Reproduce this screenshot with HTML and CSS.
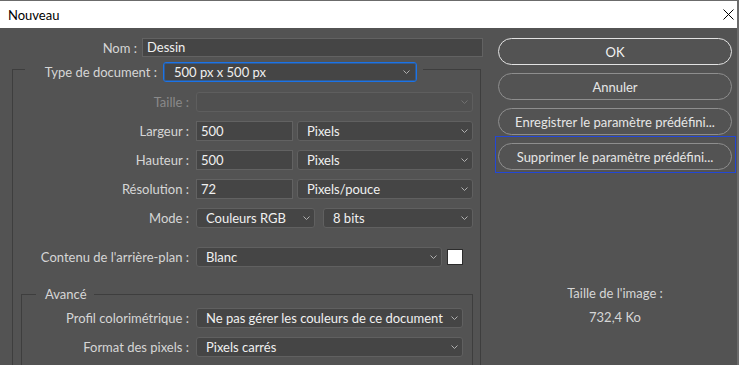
FILE: index.html
```html
<!DOCTYPE html>
<html lang="fr">
<head>
<meta charset="utf-8">
<title>Nouveau</title>
<link rel="stylesheet" href="styles.css">
</head>
<body>
<div class="window">
  <div class="titlebar">
    <span class="title">Nouveau</span>
    <svg class="close" width="11" height="11" viewBox="0 0 11 11"><path d="M0.5 0.5 L10.5 10.5 M10.5 0.5 L0.5 10.5" stroke="#000" stroke-width="1" fill="none"/></svg>
  </div>
  <div class="dialog-body">
    <div class="left">
      <div class="name-row">
        <span class="lbl">Nom :</span>
        <div class="input name-input">Dessin</div>
      </div>
      <fieldset class="doc">
        <legend class="doc-legend">
          <span class="lbl legend-lbl">Type de document :</span>
          <div class="select focus"><span>500 px x 500 px</span><svg class="chev" width="7" height="4" viewBox="0 0 7 4"><path d="M0.5 0.5 L3.5 3.5 L6.5 0.5"/></svg></div>
        </legend>
        <div class="form">
          <span class="lbl disabled">Taille :</span>
          <div class="select off"><span></span><svg class="chev" width="7" height="4" viewBox="0 0 7 4"><path d="M0.5 0.5 L3.5 3.5 L6.5 0.5"/></svg></div>

          <span class="lbl">Largeur :</span>
          <div class="pair">
            <div class="input">500</div>
            <div class="select"><span>Pixels</span><svg class="chev" width="7" height="4" viewBox="0 0 7 4"><path d="M0.5 0.5 L3.5 3.5 L6.5 0.5"/></svg></div>
          </div>

          <span class="lbl">Hauteur :</span>
          <div class="pair">
            <div class="input">500</div>
            <div class="select"><span>Pixels</span><svg class="chev" width="7" height="4" viewBox="0 0 7 4"><path d="M0.5 0.5 L3.5 3.5 L6.5 0.5"/></svg></div>
          </div>

          <span class="lbl">Résolution :</span>
          <div class="pair">
            <div class="input">72</div>
            <div class="select"><span>Pixels/pouce</span><svg class="chev" width="7" height="4" viewBox="0 0 7 4"><path d="M0.5 0.5 L3.5 3.5 L6.5 0.5"/></svg></div>
          </div>

          <span class="lbl">Mode :</span>
          <div class="pair mode">
            <div class="select"><span>Couleurs RGB</span><svg class="chev" width="7" height="4" viewBox="0 0 7 4"><path d="M0.5 0.5 L3.5 3.5 L6.5 0.5"/></svg></div>
            <div class="select"><span>8 bits</span><svg class="chev" width="7" height="4" viewBox="0 0 7 4"><path d="M0.5 0.5 L3.5 3.5 L6.5 0.5"/></svg></div>
          </div>
        </div>

        <div class="form bg-row">
          <span class="lbl">Contenu de l'arrière-plan :</span>
          <div class="pair bg">
            <div class="select"><span>Blanc</span><svg class="chev" width="7" height="4" viewBox="0 0 7 4"><path d="M0.5 0.5 L3.5 3.5 L6.5 0.5"/></svg></div>
            <div class="swatch"></div>
          </div>
        </div>

        <fieldset class="adv">
          <legend class="adv-legend">Avancé</legend>
          <div class="form inner">
            <span class="lbl">Profil colorimétrique :</span>
            <div class="select"><span>Ne pas gérer les couleurs de ce document</span><svg class="chev" width="7" height="4" viewBox="0 0 7 4"><path d="M0.5 0.5 L3.5 3.5 L6.5 0.5"/></svg></div>

            <span class="lbl">Format des pixels :</span>
            <div class="select"><span>Pixels carrés</span><svg class="chev" width="7" height="4" viewBox="0 0 7 4"><path d="M0.5 0.5 L3.5 3.5 L6.5 0.5"/></svg></div>
          </div>
        </fieldset>
      </fieldset>
    </div>

    <div class="right">
      <div class="btn primary">OK</div>
      <div class="btn">Annuler</div>
      <div class="btn">Enregistrer le paramètre prédéfini...</div>
      <div class="btn focus-ring">Supprimer le paramètre prédéfini...</div>
      <div class="info">
        <div>Taille de l'image :</div>
        <div>732,4 Ko</div>
      </div>
    </div>
  </div>
</div>
</body>
</html>
```

FILE: styles.css
```css
html, body {
  margin: 0;
  padding: 0;
  background: #535353;
}

body {
  font-family: Lato, "Liberation Sans", sans-serif;
  font-size: 13px;
  color: #d6d6d6;
}

.window {
  width: 739px;
  height: 365px;
  box-sizing: border-box;
  border-top: 1px solid #6b6b6b;
  border-right: 2px solid #6b6b6b;
  overflow: hidden;
  display: flex;
  flex-direction: column;
}

.titlebar {
  height: 27px;
  flex: none;
  background: #ffffff;
  color: #000;
  display: flex;
  align-items: center;
  justify-content: space-between;
  padding: 0 3px 0 8px;
  font-size: 13px;
}

.close {
  display: block;
}

.dialog-body {
  flex: 1;
  display: flex;
  gap: 15px;
  padding-top: 10px;
  min-height: 0;
}

.left {
  width: 483px;
  flex: none;
}

.lbl {
  text-align: right;
  line-height: 20px;
  white-space: nowrap;
}

.lbl.disabled {
  color: #8a8a8a;
}

.name-row {
  display: flex;
  gap: 5px;
  align-items: center;
  height: 19px;
}

.name-row .lbl {
  width: 137px;
}

.input {
  box-sizing: border-box;
  height: 20px;
  background: #454545;
  border: 1px solid #626262;
  color: #f0f0f0;
  padding: 0 4px;
  line-height: 18px;
  white-space: nowrap;
}

.name-input {
  width: 341px;
  height: 19px;
  line-height: 17px;
}

.select {
  box-sizing: border-box;
  height: 20px;
  background: #454545;
  border: 1px solid #606060;
  border-radius: 3px;
  color: #f0f0f0;
  display: flex;
  align-items: center;
  justify-content: space-between;
  padding: 0 4px 0 9px;
  line-height: 18px;
  white-space: nowrap;
  min-width: 0;
}

.chev {
  flex: none;
  fill: none;
  stroke: #b0b0b0;
  stroke-width: 1;
}

.select.off {
  background: #505050;
  border-color: #5e5e5e;
}

.select.off .chev {
  stroke: #707070;
}

.select.focus {
  border: 1px solid #1a73e8;
  box-shadow: inset 0 0 0 1px rgba(26, 115, 232, 0.45);
  width: 254px;
  padding-left: 10px;
  padding-right: 6px;
  flex: none;
}

fieldset {
  min-width: 0;
  margin: 0;
}

fieldset.doc {
  margin: 5px 0 0 12px;
  width: 469px;
  box-sizing: border-box;
  border: 1px solid #3e3e3e;
  padding: 16px 7px 80px 8px;
}

.doc-legend {
  display: flex;
  align-items: flex-start;
  gap: 6px;
  height: 14px;
  padding: 0 6px;
  margin-left: 4px;
}

.legend-lbl {
  width: 126px;
  flex: none;
}

.form {
  display: grid;
  grid-template-columns: 168px 1fr;
  column-gap: 7px;
  row-gap: 9px;
  align-items: center;
}

.pair {
  display: grid;
  grid-template-columns: 97px 1fr;
  column-gap: 4px;
}

.pair.mode {
  grid-template-columns: 119px 1fr;
  column-gap: 8px;
}

.pair.bg {
  grid-template-columns: 246px 16px;
  column-gap: 5px;
  align-items: center;
}

.bg-row {
  margin-top: 19px;
}

.swatch {
  box-sizing: border-box;
  width: 16px;
  height: 16px;
  background: #ffffff;
  border: 1px solid #2c2c2c;
}

fieldset.adv {
  margin-top: 19px;
  border: 1px solid #3e3e3e;
  padding: 6px 9px 60px 0;
}

.adv-legend {
  margin-left: 14px;
  padding: 0 7px 0 9px;
  line-height: 16px;
}

.form.inner {
  grid-template-columns: 167px 1fr;
}

.right {
  width: 234px;
  flex: none;
  display: flex;
  flex-direction: column;
  gap: 8px;
}

.btn {
  position: relative;
  box-sizing: border-box;
  height: 27px;
  border: 1px solid #8e8e8e;
  border-radius: 14px;
  display: flex;
  align-items: center;
  justify-content: center;
  color: #e6e6e6;
  white-space: nowrap;
}

.btn.primary {
  border-color: #e2e2e2;
  color: #f2f2f2;
}

.btn.focus-ring::before {
  content: "";
  position: absolute;
  left: -4px;
  top: -8px;
  right: -5px;
  bottom: -4px;
  border: 1px solid #2347d6;
  pointer-events: none;
}

.info {
  margin-top: 107px;
  display: flex;
  flex-direction: column;
  gap: 8px;
  text-align: center;
  line-height: 16px;
  color: #d6d6d6;
}
```
